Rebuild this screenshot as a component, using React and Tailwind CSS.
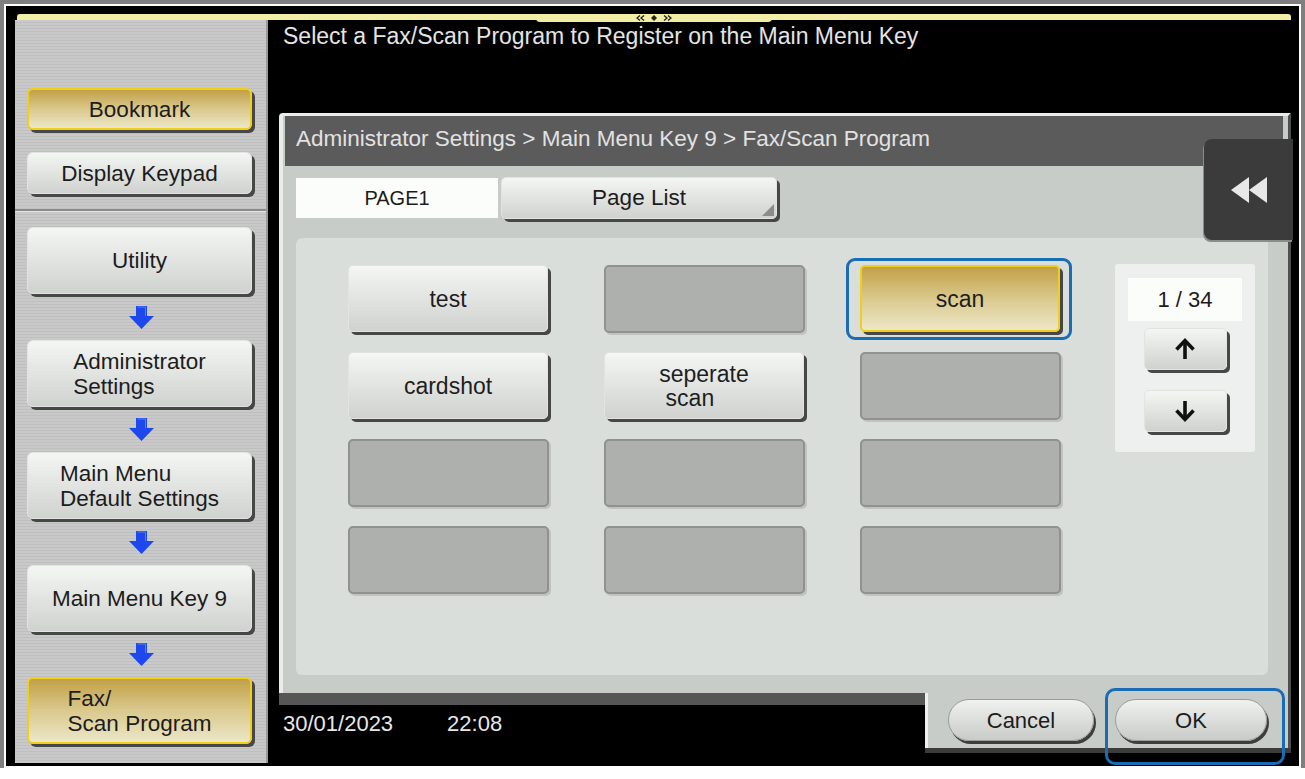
const grayKey =
    "border border-[#e2e4e2] bg-linear-to-b from-[#f4f6f4] to-[#d0d2d0] shadow-[3px_3px_0_#474747]";
const yellowKey =
    "border-2 border-[#efcf1c] bg-linear-to-b from-[#c2a046] via-[#dac98c] to-[#ece7c8] shadow-[3px_3px_0_#474747]";

function SideButton({ children, yellow, short, className = "" }) {
    return (
        <div className={`pl-[12px] ${className}`}>
            <div
                className={`w-[225px] ${short ? "h-[42px]" : "h-[67px]"} ${
                    yellow ? yellowKey : grayKey
                } rounded-[6px] flex items-center justify-center text-[22.5px] leading-[25px] text-[#1c1c1c]`}
            >
                <div className="text-left whitespace-pre">{children}</div>
            </div>
        </div>
    );
}

function BlueArrow({ className }) {
    return (
        <div className={`pl-[12px] w-[240px] flex items-center justify-center ${className}`}>
            <svg width="25" height="23" viewBox="0 0 25 23">
                <path d="M7 0H18V10H25L12.5 23L0 10H7Z" fill="#1d48ee" />
                <path d="M8.5 1H16.5V10" stroke="#5a7dff" strokeWidth="1" fill="none" />
            </svg>
        </div>
    );
}

function Sidebar() {
    return (
        <div className="w-[253px] mb-[3px] border-r-2 border-r-[#9a9a9a] bg-[repeating-linear-gradient(180deg,#c9c9c9_0px,#c9c9c9_2px,#bfbfbf_2px,#bfbfbf_3px)] pt-[68px]">
            <SideButton yellow short>
                Bookmark
            </SideButton>
            <SideButton short className="mt-[22px]">
                Display Keypad
            </SideButton>
            <div className="mt-[15px] h-[3px] border-t-2 border-[#8b8b8b] bg-[#e2e2e2]" />
            <SideButton className="mt-[15px]">Utility</SideButton>
            <BlueArrow className="h-[46px]" />
            <SideButton>{"Administrator\nSettings"}</SideButton>
            <BlueArrow className="h-[45px]" />
            <SideButton>{"Main Menu\nDefault Settings"}</SideButton>
            <BlueArrow className="h-[46px]" />
            <SideButton>Main Menu Key 9</SideButton>
            <BlueArrow className="h-[45px]" />
            <SideButton yellow>{"Fax/\nScan Program"}</SideButton>
        </div>
    );
}

function ProgramKey({ label, yellow, selected }) {
    if (!label) {
        return (
            <div className="w-[203px] h-[70px]">
                <div className="w-[201px] h-[68px] rounded-[5px] border-2 border-[#8f928f] bg-[#adb0ad] shadow-[2px_2px_0_#c0c3c0]" />
            </div>
        );
    }
    return (
        <div className="w-[203px] h-[70px]">
            <div className="relative w-[200px] h-[67px]">
                {selected && (
                    <div className="absolute -left-[14px] -right-[12px] -top-[7px] -bottom-[8px] rounded-[9px] border-[3px] border-[#1a6cb5]" />
                )}
                <div
                    className={`relative w-full h-full rounded-[5px] ${
                        yellow ? yellowKey : grayKey
                    } flex items-center justify-center text-[23px] leading-[24px] text-[#1e1e1e]`}
                >
                    <div className="text-left whitespace-pre">{label}</div>
                </div>
            </div>
        </div>
    );
}

function PagerButton({ up, className }) {
    return (
        <div
            className={`w-[83px] h-[42px] rounded-[5px] ${grayKey} flex items-center justify-center ${className}`}
        >
            <svg width="24" height="24" viewBox="0 0 24 24" className={up ? "" : "rotate-180"}>
                <path d="M12 22V4" stroke="#111" strokeWidth="3.6" fill="none" />
                <path d="M3.5 12.5L12 3.5L20.5 12.5" stroke="#111" strokeWidth="3.6" fill="none" />
            </svg>
        </div>
    );
}

function Pager() {
    return (
        <div className="ml-[52px] -mt-[1px] w-[140px] h-[188px] rounded-[3px] bg-[#eef0ef] flex flex-col items-center pt-[14px]">
            <div className="w-[114px] h-[43px] bg-[#fbfdfb] flex items-center justify-center text-[22px] text-[#1c1c1c]">
                1 / 34
            </div>
            <PagerButton up className="mt-[7px]" />
            <PagerButton className="mt-[20px]" />
        </div>
    );
}

const keys = [
    { label: "test" },
    {},
    { label: "scan", yellow: true, selected: true },
    { label: "cardshot" },
    { label: "seperate\n scan" },
    {},
    {},
    {},
    {},
    {},
    {},
    {},
];

function Dialog() {
    return (
        <div className="ml-[11px] w-[1012px] h-[580px] flex flex-col bg-[#c7ccc9] border-t-[3px] border-l-[4px] border-r-[3px] border-t-[#e9ece9] border-l-[#e9ece9] border-r-[#4f4f4f] rounded-tl-[4px]">
            <div className="ml-[2px] mr-[5px] h-[50px] bg-[#5b5b5b] flex items-center pl-[11px] pb-[4px] text-[22.5px] text-[#e2e2e2]">
                Administrator Settings &gt; Main Menu Key 9 &gt; Fax/Scan Program
            </div>
            <div className="pl-[13px] pt-[11px]">
                <div className="flex items-start h-[45px]">
                    <div className="mt-[1px] w-[202px] h-[40px] bg-[#fbfdfb] flex items-center justify-center text-[20px] text-[#1c1c1c]">
                        PAGE1
                    </div>
                    <div
                        className={`relative ml-[3px] w-[276px] h-[42px] rounded-[5px] ${grayKey} flex items-center justify-center text-[22.5px] text-[#1c1c1c]`}
                    >
                        Page List
                        <svg
                            width="12"
                            height="12"
                            viewBox="0 0 12 12"
                            className="absolute right-[2px] bottom-[2px]"
                        >
                            <polygon points="12,0 12,12 0,12" fill="#8c8c8c" />
                        </svg>
                    </div>
                </div>
                <div className="mt-[16px] w-[972px] h-[437px] rounded-[6px] bg-[#d9dedb] flex items-start pl-[52px] pt-[27px]">
                    <div className="grid grid-cols-[203px_203px_203px] gap-x-[53px] gap-y-[17px]">
                        {keys.map((k, i) => (
                            <ProgramKey key={i} {...k} />
                        ))}
                    </div>
                    <Pager />
                </div>
            </div>
        </div>
    );
}

function Pill({ children, className }) {
    return (
        <div
            className={`h-[42px] rounded-full border border-[#9a9c9a] bg-linear-to-b from-[#f0f2f0] to-[#c8cbc8] shadow-[2px_3px_0_#3d3d3d] flex items-center justify-center text-[22px] text-[#1c1c1c] ${className}`}
        >
            {children}
        </div>
    );
}

function BottomRow() {
    return (
        <div className="ml-[11px] w-[1012px] flex flex-1 items-start">
            <div className="w-[646px] h-full border-t-[12px] border-[#565656] bg-black pl-[4px] pt-[6px] flex text-[22px] leading-[26px] text-[#e6e6e6]">
                <span>30/01/2023</span>
                <span className="ml-[54px]">22:08</span>
            </div>
            <div className="w-[366px] h-[55px] border-l-[3px] border-r-[3px] border-l-[#eef0ee] border-r-[#4f4f4f] bg-[#c7ccc9] shadow-[0_5px_0_#3c3c3c] flex pl-[20px] pt-[6px] gap-[21px]">
                <Pill className="w-[146px]">Cancel</Pill>
                <div className="relative">
                    <div className="absolute -left-[10px] -right-[18px] -top-[11px] -bottom-[17px] rounded-[10px] border-[3px] border-[#1a6cb5]" />
                    <Pill className="relative w-[152px]">OK</Pill>
                </div>
            </div>
        </div>
    );
}

export default function App() {
    return (
        <div className="w-[1305px] h-[779px] bg-white overflow-hidden font-['Liberation_Sans',Arial,sans-serif]">
            <div className="h-[768px] bg-[#7f7f7f] pt-[4px] pl-[4px] pr-[4px]">
                <div className="h-full border-2 border-white bg-black pl-[9px] pr-[8px] pt-[8px] flex flex-col">
                    <div className="ml-[2px] h-[6px] shrink-0 bg-[#f2eea6] rounded-t-[3px] flex justify-center">
                        <div className="relative z-10 w-[236px] h-[8px] bg-[#f2eea6] rounded-b-[4px] flex justify-center pt-[1px]">
                            <svg width="36" height="6" viewBox="0 0 36 6">
                                <path
                                    d="M4 0.5L1 3L4 5.5M8 0.5L5 3L8 5.5M28 0.5L31 3L28 5.5M32 0.5L35 3L32 5.5"
                                    stroke="#222"
                                    strokeWidth="1.3"
                                    fill="none"
                                />
                                <path d="M18 0L21 3L18 6L15 3Z" fill="#222" />
                            </svg>
                        </div>
                    </div>
                    <div className="flex flex-1">
                        <Sidebar />
                        <div className="relative flex-1 flex flex-col">
                            <div className="h-[93px] shrink-0 pl-[15px] pt-[3px] text-[23px] leading-[26px] text-[#e4e4e4]">
                                Select a Fax/Scan Program to Register on the Main Menu Key
                            </div>
                            <Dialog />
                            <BottomRow />
                            <div className="absolute left-[936px] top-[119px] w-[89px] h-[101px] rounded-l-[8px] bg-[#3a3b3a] shadow-[-1px_2px_0_#8a8d8a] flex items-center justify-center">
                                <svg width="36" height="26" viewBox="0 0 36 26">
                                    <polygon points="18,0 0,13 18,26" fill="#e8e8e8" />
                                    <polygon points="36,0 18,13 36,26" fill="#e8e8e8" />
                                </svg>
                            </div>
                        </div>
                    </div>
                </div>
            </div>
        </div>
    );
}
